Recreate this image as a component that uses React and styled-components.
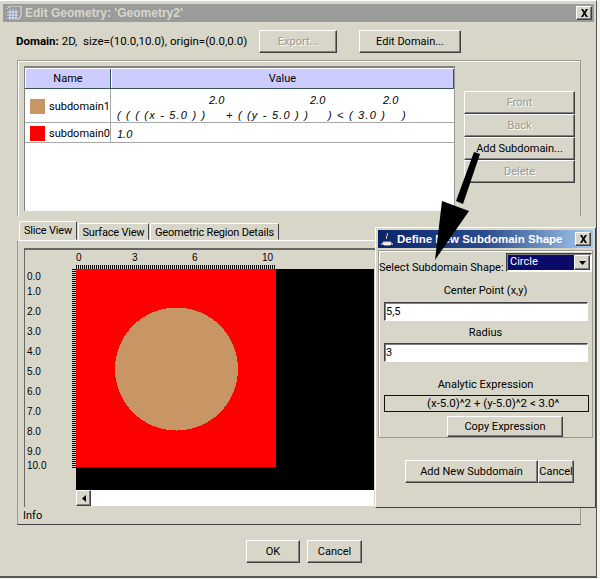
import React from 'react'
import styled, { createGlobalStyle, css } from 'styled-components'

const uiFont = `Roboto, "Liberation Sans", Arial, sans-serif`

const Global = createGlobalStyle`
  html, body { margin: 0; padding: 0; background: #f4f3ee; }
  body { font-family: ${uiFont}; font-size: 11px; color: #000; }
`

const raised = css`
  border: 1px solid;
  border-color: #fff #404040 #404040 #fff;
  box-shadow: inset -1px -1px 0 #808080;
`

const sunken = css`
  border: 1px solid;
  border-color: #404040 #fff #fff #404040;
  box-shadow: inset 1px 1px 0 #808080;
`

const Window = styled.div`
  position: relative;
  box-sizing: border-box;
  width: 597px;
  height: 578px;
  padding: 3px 2px 0 3px;
  background: #d8d6c9;
  border-bottom: 2px solid #555;
  border-right: 1px solid #555;
  border-top: 1px solid #fff;
  overflow: hidden;
`

const TitleBar = styled.div`
  height: 18px;
  background: #9b9b9b;
  display: flex;
  align-items: center;
  padding: 0 2px;
  gap: 3px;
  color: #d8d6c9;
  font: bold 12px "Liberation Sans", Arial, sans-serif;
`

const TitleText = styled.span`
  flex: 1;
  white-space: nowrap;
`

const CloseBox = styled.button`
  ${raised}
  box-sizing: border-box;
  width: 16px;
  height: 14px;
  padding: 0;
  background: #d8d6c9;
  display: flex;
  align-items: center;
  justify-content: center;
`

const DomainRow = styled.div`
  height: 38px;
  display: flex;
  align-items: center;
  padding: 0 0 0 13px;
  box-sizing: border-box;
`

const DomainText = styled.span`
  width: 243px;
  white-space: pre;
  font-size: 11.5px;
  b { font-weight: bold; }
`

const Button = styled.button`
  ${raised}
  box-sizing: border-box;
  width: ${p => p.$w}px;
  height: ${p => p.$h || 23}px;
  margin: ${p => p.$m || 0};
  padding: 0;
  background: #d8d6c9;
  font: 11px ${uiFont};
  color: ${p => (p.disabled ? '#9a9a92' : '#000')};
  text-shadow: ${p => (p.disabled ? '1px 1px 0 #fff' : 'none')};
  white-space: nowrap;
`

const TablePanel = styled.div`
  box-sizing: border-box;
  width: 564px;
  height: 156px;
  margin-left: 14px;
  padding: 5px 0 0 6px;
  border: 1px solid #9b9b93;
  border-bottom: 0;
  box-shadow: inset 1px 1px 0 #fff;
  display: flex;
`

const TableArea = styled.div`
  box-sizing: border-box;
  width: 431px;
  height: 145px;
  background: #fff;
  border-top: 2px solid #808080;
  border-left: 1px solid #808080;
  border-right: 1px solid #999;
`

const Row = styled.div`
  display: grid;
  grid-template-columns: 86px 1fr;
  height: ${p => p.$h}px;
  box-sizing: border-box;
  border-bottom: 1px solid #a8a8a8;
`

const HeadCell = styled.div`
  background: #ccccff;
  display: flex;
  align-items: center;
  justify-content: center;
  border-right: 1px solid #36565e;
  border-left: 1px solid #fff;
`

const HeadRow = styled(Row)`
  border-bottom: 1px solid #36565e;
  border-top: 1px solid #fff;
`

const NameCell = styled.div`
  display: flex;
  align-items: center;
  gap: 4px;
  padding: 2px 0 0 5px;
  border-right: 1px solid #a8a8a8;
`

const Swatch = styled.span`
  flex: none;
  width: 15px;
  height: 15px;
  background: ${p => p.$color};
`

const ValueCell = styled.div`
  display: flex;
  align-items: ${p => (p.$bottom ? 'flex-end' : 'center')};
  padding: ${p => (p.$bottom ? '0 0 1px 6px' : '3px 0 0 6px')};
  font: italic 11px "Liberation Sans", Arial, sans-serif;
`

const Term = styled.span`
  display: flex;
  align-items: flex-start;
  padding-top: 3px;
  box-sizing: border-box;
  width: ${p => p.$w}px;
  flex: none;
  height: 30px;
  white-space: pre;
`

const Base = styled.span`
  align-self: flex-end;
  letter-spacing: 1.2px;
`

const Sup = styled.span`
  margin-left: ${p => p.$m}px;
`

const SideButtons = styled.div`
  display: flex;
  flex-direction: column;
  margin: 25px 0 0 9px;
`

const Tabs = styled.div`
  display: flex;
  align-items: flex-end;
  height: 24px;
  margin-left: 16px;
  gap: 1px;
`

const Tab = styled.div`
  box-sizing: border-box;
  height: ${p => (p.$active ? 19 : 17)}px;
  width: ${p => p.$w}px;
  padding-top: ${p => (p.$active ? 0 : 1)}px;
  border: 1px solid;
  border-color: #fff #404040 transparent #fff;
  border-radius: 2px 2px 0 0;
  display: flex;
  align-items: center;
  justify-content: center;
  white-space: nowrap;
  letter-spacing: -0.2px;
`

const TabPanel = styled.div`
  box-sizing: border-box;
  width: 564px;
  height: 285px;
  margin-left: 14px;
  padding: 7px 0 0 6px;
  border: 1px solid;
  border-color: #fff #9b9b93 #404040 #9b9b93;
  display: flex;
  flex-direction: column;
`

const SliceFrame = styled.div`
  box-sizing: border-box;
  height: 259px;
  width: 100%;
  border-top: 2px solid #666;
  border-left: 1px solid #666;
`

const SliceSvg = styled.svg`
  display: block;
  font-family: "Liberation Sans", Arial, sans-serif;
  font-size: 10px;
`

const ScrollRow = styled.div`
  height: 16px;
  margin-left: 51px;
  width: 298px;
  background: #fff;
  display: flex;
`

const ScrollBtn = styled.div`
  ${raised}
  box-sizing: border-box;
  width: 15px;
  height: 16px;
  background: #d8d6c9;
  display: flex;
  align-items: center;
  justify-content: center;
`

const InfoLabel = styled.div`
  margin: 2px 0 0 -1px;
`

const Footer = styled.div`
  display: flex;
  gap: 7px;
  margin: 15px 0 0 243px;
`

const Dialog = styled.div`
  position: absolute;
  left: 375px;
  top: 226px;
  box-sizing: border-box;
  width: 221px;
  height: 281px;
  padding: 2px;
  background: #d8d6c9;
  border: 1px solid;
  border-color: #fff #404040 #404040 #fff;
  display: flex;
  flex-direction: column;
`

const DialogTitle = styled.div`
  height: 18px;
  flex: none;
  background: linear-gradient(90deg, #0a246a 0%, #2b4c8c 50%, #a6caf0 100%);
  color: #fff;
  font: bold 11.5px "Liberation Sans", Arial, sans-serif;
  display: flex;
  align-items: center;
  padding: 0 2px;
  gap: 3px;
`

const DialogBody = styled.div`
  box-sizing: border-box;
  height: 188px;
  flex: none;
  margin-top: 2px;
  border: 1px solid #9b9b93;
  box-shadow: inset 1px 1px 0 #fff;
  display: flex;
  flex-direction: column;
  padding: 2px 5px 0 5px;
`

const ShapeRow = styled.div`
  display: flex;
  align-items: flex-end;
  justify-content: space-between;
  height: 19px;
  flex: none;
  margin: 0 -5px 0 -5px;
  white-space: nowrap;
`

const ShapeLabel = styled.span`
  line-height: 13px;
  margin-bottom: -2px;
`

const Combo = styled.div`
  ${sunken}
  box-sizing: border-box;
  width: 86px;
  height: 19px;
  display: flex;
  background: #fff;
  padding: 1px;
`

const ComboValue = styled.span`
  flex: 1;
  background: #0a0a6a;
  color: #fff;
  padding-left: 2px;
`

const ComboArrow = styled.span`
  ${raised}
  box-sizing: border-box;
  width: 16px;
  background: #d8d6c9;
  display: flex;
  align-items: center;
  justify-content: center;
`

const FieldLabel = styled.div`
  text-align: center;
  margin-top: ${p => p.$m}px;
  line-height: 14px;
  flex: none;
`

const Field = styled.input`
  ${sunken}
  box-sizing: border-box;
  width: 204px;
  height: 19px;
  flex: none;
  margin-top: ${p => p.$m}px;
  padding: 0 0 0 1px;
  background: #fff;
  font: 11px ${uiFont};
  outline: none;
`

const Expression = styled.div`
  box-sizing: border-box;
  width: 205px;
  height: 17px;
  flex: none;
  margin-top: 3px;
  border: 1px solid #111;
  padding-left: 42px;
  line-height: 15px;
  font-size: 11.5px;
  white-space: nowrap;
  overflow: hidden;
`

const DialogActions = styled.div`
  display: flex;
  margin: 22px 0 0 27px;
`

const Arrow = styled.svg`
  position: absolute;
  left: 0;
  top: 0;
  pointer-events: none;
`

const XIcon = () => (
  <svg width="9" height="8" viewBox="0 0 9 8">
    <path d="M1 0h2l1.500 2.500L6 0h2L5.500 4 8 8H6L4.500 5.500 3 8H1l2.500-4z" fill="#000" />
  </svg>
)

const Down = () => (
  <svg width="7" height="4" viewBox="0 0 7 4"><path d="M0 0h7L3.500 4z" fill="#000" /></svg>
)

const ticks = n => Array.from({ length: n }, (_, i) => i)
const rowLabels = [
  ['0.0', 277], ['1.0', 292], ['2.0', 312], ['3.0', 332], ['4.0', 352], ['5.0', 372],
  ['6.0', 392], ['7.0', 412], ['8.0', 432], ['9.0', 452], ['10.0', 466],
]
const colLabels = [['0', 76], ['3', 132], ['6', 192], ['10', 262]]

// drawn in page coordinates, the viewBox starts at the frame's corner
const SliceView = () => (
  <SliceSvg width="540" height="240" viewBox="25 250 540 240" shapeRendering="crispEdges">
    {colLabels.map(([t, x]) => <text key={t} x={x} y={261}>{t}</text>)}
    {rowLabels.map(([t, y]) => <text key={t} x={27} y={y + 3}>{t}</text>)}
    {ticks(100).map(i => <rect key={i} x={76 + i * 2} y={265} width={1} height={4} fill="#000" />)}
    {ticks(100).map(i => <rect key={i} x={72} y={269 + i * 2} width={4} height={1} fill="#000" />)}
    <rect x={76} y={269} width={298} height={221} fill="#000" />
    <rect x={76} y={269} width={200} height={199} fill="#f00" />
    <rect x={76} y={467} width={200} height={1} fill="#8c0000" />
    <circle cx={176.500} cy={369} r={61.500} fill="#c89664" />
  </SliceSvg>
)

export default function App() {
  return (
    <>
      <Global />
      <Window>
        <TitleBar>
          <svg width="17" height="15" viewBox="0 0 17 15">
            <rect x="2" y="3" width="11" height="11" fill="#7f8fb0" />
            <path d="M2 3l3-3h11v10l-3 4M2 6h11M2 9h11M2 12h11M5 3v11M8 3v11M11 3v11" stroke="#e8e8f0" fill="none" />
          </svg>
          <TitleText>Edit Geometry: 'Geometry2'</TitleText>
          <CloseBox><XIcon /></CloseBox>
        </TitleBar>
        <DomainRow>
          <DomainText><b>Domain:</b> 2D,  size=(10.0,10.0), origin=(0.0,0.0)</DomainText>
          <Button $w={78} disabled>Export...</Button>
          <Button $w={102} $m="0 0 0 22px">Edit Domain...</Button>
        </DomainRow>
        <TablePanel>
          <TableArea>
            <HeadRow $h={21}>
              <HeadCell>Name</HeadCell>
              <HeadCell>Value</HeadCell>
            </HeadRow>
            <Row $h={34}>
              <NameCell><Swatch $color="#c89664" />subdomain1</NameCell>
              <ValueCell $bottom>
                <Term $w={109}><Base>( ( ( (x - 5.0 ) )</Base></Term>
                <Term $w={0}><Sup $m={-17}>2.0</Sup></Term>
                <Term $w={102}><Base>+ ( (y - 5.0 ) )</Base></Term>
                <Term $w={0}><Sup $m={-18}>2.0</Sup></Term>
                <Term $w={74}><Base>) &lt; ( 3.0 )</Base></Term>
                <Term $w={0}><Sup $m={-19}>2.0</Sup></Term>
                <Term $w={10}><Base>)</Base></Term>
              </ValueCell>
            </Row>
            <Row $h={20}>
              <NameCell><Swatch $color="#f00" />subdomain0</NameCell>
              <ValueCell>1.0</ValueCell>
            </Row>
          </TableArea>
          <SideButtons>
            <Button $w={111} disabled>Front</Button>
            <Button $w={111} disabled>Back</Button>
            <Button $w={111}>Add Subdomain...</Button>
            <Button $w={111} disabled>Delete</Button>
          </SideButtons>
        </TablePanel>
        <Tabs>
          <Tab $active $w={58}>Slice View</Tab>
          <Tab $w={71}>Surface View</Tab>
          <Tab $w={129}>Geometric Region Details</Tab>
        </Tabs>
        <TabPanel>
          <SliceFrame>
            <SliceView />
            <ScrollRow>
              <ScrollBtn>
                <svg width="4" height="7" viewBox="0 0 4 7"><path d="M4 0v7L0 3.500z" fill="#000" /></svg>
              </ScrollBtn>
            </ScrollRow>
          </SliceFrame>
          <InfoLabel>Info</InfoLabel>
        </TabPanel>
        <Footer>
          <Button $w={54}>OK</Button>
          <Button $w={55}>Cancel</Button>
        </Footer>
        <Dialog>
          <DialogTitle>
            <svg width="14" height="14" viewBox="0 0 14 14">
              <path d="M3 10h8l-1 3H4zM7 1c2 2-2 3 0 6" stroke="#f2d0a0" fill="#dfe6f2" />
              <path d="M1 12h12" stroke="#fff" />
            </svg>
            <TitleText>Define New Subdomain Shape</TitleText>
            <CloseBox><XIcon /></CloseBox>
          </DialogTitle>
          <DialogBody>
            <ShapeRow>
              <ShapeLabel>Select Subdomain Shape:</ShapeLabel>
              <Combo>
                <ComboValue>Circle</ComboValue>
                <ComboArrow><Down /></ComboArrow>
              </Combo>
            </ShapeRow>
            <FieldLabel $m={12}>Center Point (x,y)</FieldLabel>
            <Field $m={4} defaultValue="5,5" />
            <FieldLabel $m={5}>Radius</FieldLabel>
            <Field $m={3} defaultValue="3" />
            <FieldLabel $m={16}>Analytic Expression</FieldLabel>
            <Expression>(x-5.0)^2 + (y-5.0)^2 &lt; 3.0^</Expression>
            <Button $w={116} $h={23} $m="4px 0 0 63px">Copy Expression</Button>
          </DialogBody>
          <DialogActions>
            <Button $w={133}>Add New Subdomain</Button>
            <Button $w={36}>Cancel</Button>
          </DialogActions>
        </Dialog>
        <Arrow width="597" height="578" viewBox="0 0 597 578">
          <path d="M474 151l6 2-17 50-7-3z" fill="#000" />
          <path d="M442 200l27 10-34 49z" fill="#000" />
        </Arrow>
      </Window>
    </>
  )
}
